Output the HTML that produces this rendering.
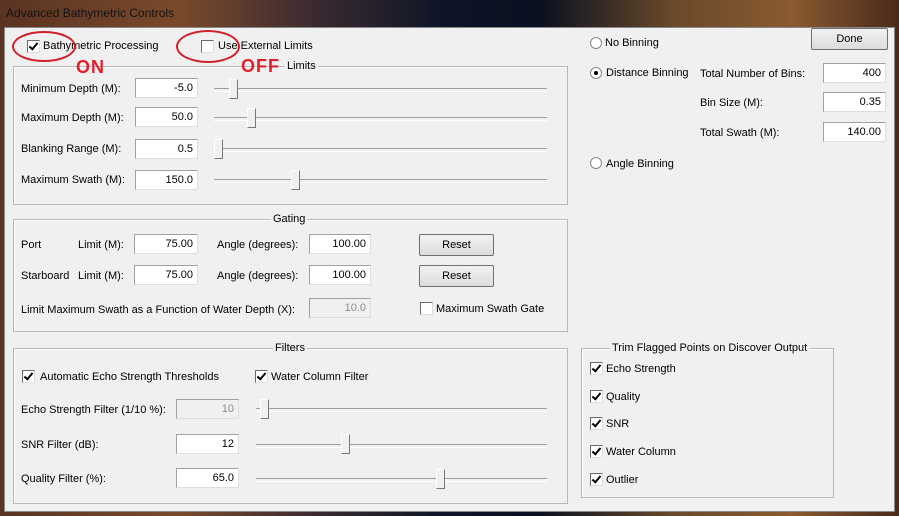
<!DOCTYPE html>
<html><head><meta charset="utf-8"><style>
body{margin:0;width:899px;height:516px;overflow:hidden;position:relative;font-family:"Liberation Sans",sans-serif;font-size:11px;color:#000;
background:linear-gradient(90deg,#5a3422 0%,#7a4a2c 20%,#3a2a30 35%,#0c1426 50%,#0a1020 60%,#6a4a2a 75%,#8a5a30 88%,#4a2a1a 100%);}
.title{position:absolute;left:6px;top:6px;font-size:12px;color:#111;}
.client{position:absolute;left:4px;top:27px;width:891px;height:485px;background:#f0f0f0;border:1px solid #888;box-sizing:border-box;}
.a{position:absolute;white-space:nowrap;line-height:14px;}
.g{position:absolute;border:1px solid #b8b8b8;box-shadow:1px 1px 0 #fff inset;}
.gt{position:absolute;top:-8px;background:#f0f0f0;padding:0 2px;line-height:14px;}
.in{position:absolute;height:20px;box-sizing:border-box;background:#fff;border:1px solid #a0a0a0;border-right-color:#ddd;border-bottom-color:#ddd;text-align:right;padding-right:4px;line-height:18px;}
.in.d{background:#f0f0f0;color:#8a8a8a;}
.cb{position:absolute;width:13px;height:13px;box-sizing:border-box;background:#fff;border:1px solid #6a6a6a;border-right-color:#ddd;border-bottom-color:#ddd;}
.cb.k::after{content:"";position:absolute;left:3px;top:0px;width:3px;height:7px;border:solid #000;border-width:0 2px 2px 0;transform:rotate(40deg);}
.rb{position:absolute;width:12px;height:12px;border-radius:50%;box-sizing:border-box;background:#fff;border:1px solid #888;}
.rb.k::after{content:"";position:absolute;left:3px;top:3px;width:4px;height:4px;border-radius:50%;background:#000;}
.tr{position:absolute;height:2px;border-top:1px solid #a0a0a0;border-bottom:1px solid #fff;}
.th{position:absolute;width:9px;height:20px;box-sizing:border-box;background:#f0f0f0;border:1px solid #fff;border-right-color:#777;border-bottom-color:#777;}
.bt{position:absolute;height:22px;box-sizing:border-box;background:linear-gradient(#f2f2f2,#dcdcdc);border:1px solid #707070;border-radius:2px;text-align:center;line-height:20px;}
.el{position:absolute;border:2px solid #d0202a;border-radius:50%;z-index:4;}
.red{position:absolute;color:#e0202a;font-weight:bold;font-size:18px;line-height:18px;letter-spacing:1px;z-index:5;}
</style></head><body>
<div class="title">Advanced Bathymetric Controls</div>
<div class="client"></div>

<!-- Limits -->
<div class="g" style="left:13px;top:66px;width:553px;height:137px"><div class="gt" style="left:271px">Limits</div></div>
<div class="a" style="left:21px;top:82px">Minimum Depth (M):</div><div class="in" style="left:135px;top:78px;width:63px">-5.0</div>
<div class="tr" style="left:214px;top:88px;width:333px"></div><div class="th" style="left:229px;top:79px"></div>
<div class="a" style="left:21px;top:111px">Maximum Depth (M):</div><div class="in" style="left:135px;top:107px;width:63px">50.0</div>
<div class="tr" style="left:214px;top:117px;width:333px"></div><div class="th" style="left:247px;top:108px"></div>
<div class="a" style="left:21px;top:142px">Blanking Range (M):</div><div class="in" style="left:135px;top:139px;width:63px">0.5</div>
<div class="tr" style="left:214px;top:148px;width:333px"></div><div class="th" style="left:214px;top:139px"></div>
<div class="a" style="left:21px;top:173px">Maximum Swath (M):</div><div class="in" style="left:135px;top:170px;width:63px">150.0</div>
<div class="tr" style="left:214px;top:179px;width:333px"></div><div class="th" style="left:291px;top:170px"></div>

<div class="cb k" style="left:27px;top:40px"></div><div class="a" style="left:43px;top:39px">Bathymetric Processing</div>
<div class="cb" style="left:201px;top:40px"></div><div class="a" style="left:218px;top:39px">Use External Limits</div>
<div class="el" style="left:12px;top:31px;width:60px;height:27px"></div>
<div class="el" style="left:176px;top:30px;width:60px;height:29px"></div>
<div class="red" style="left:76px;top:58px">ON</div>
<div class="red" style="left:241px;top:57px">OFF</div>

<!-- Gating -->
<div class="g" style="left:13px;top:219px;width:553px;height:111px"><div class="gt" style="left:257px">Gating</div></div>
<div class="a" style="left:21px;top:238px">Port</div><div class="a" style="left:78px;top:238px">Limit (M):</div>
<div class="in" style="left:134px;top:234px;width:64px">75.00</div>
<div class="a" style="left:217px;top:238px">Angle (degrees):</div><div class="in" style="left:309px;top:234px;width:62px">100.00</div>
<div class="bt" style="left:419px;top:234px;width:75px">Reset</div>
<div class="a" style="left:21px;top:269px">Starboard</div><div class="a" style="left:78px;top:269px">Limit (M):</div>
<div class="in" style="left:134px;top:265px;width:64px">75.00</div>
<div class="a" style="left:217px;top:269px">Angle (degrees):</div><div class="in" style="left:309px;top:265px;width:62px">100.00</div>
<div class="bt" style="left:419px;top:265px;width:75px">Reset</div>
<div class="a" style="left:21px;top:303px">Limit Maximum Swath as a Function of Water Depth (X):</div>
<div class="in d" style="left:309px;top:298px;width:62px">10.0</div>
<div class="cb" style="left:420px;top:302px"></div><div class="a" style="left:436px;top:302px">Maximum Swath Gate</div>

<!-- Filters -->
<div class="g" style="left:13px;top:348px;width:553px;height:154px"><div class="gt" style="left:259px">Filters</div></div>
<div class="cb k" style="left:22px;top:370px"></div><div class="a" style="left:40px;top:370px">Automatic Echo Strength Thresholds</div>
<div class="cb k" style="left:255px;top:370px"></div><div class="a" style="left:271px;top:370px">Water Column Filter</div>
<div class="a" style="left:21px;top:403px">Echo Strength Filter (1/10 %):</div><div class="in d" style="left:176px;top:399px;width:63px">10</div>
<div class="tr" style="left:256px;top:408px;width:291px"></div><div class="th" style="left:260px;top:399px"></div>
<div class="a" style="left:21px;top:438px">SNR Filter (dB):</div><div class="in" style="left:176px;top:434px;width:63px">12</div>
<div class="tr" style="left:256px;top:444px;width:291px"></div><div class="th" style="left:341px;top:434px"></div>
<div class="a" style="left:21px;top:472px">Quality Filter (%):</div><div class="in" style="left:176px;top:468px;width:63px">65.0</div>
<div class="tr" style="left:256px;top:478px;width:291px"></div><div class="th" style="left:436px;top:469px"></div>

<!-- Right -->
<div class="rb" style="left:590px;top:37px"></div><div class="a" style="left:605px;top:36px">No Binning</div>
<div class="bt" style="left:811px;top:28px;width:77px">Done</div>
<div class="rb k" style="left:590px;top:67px"></div><div class="a" style="left:606px;top:66px">Distance Binning</div>
<div class="a" style="left:700px;top:67px">Total Number of Bins:</div><div class="in" style="left:823px;top:63px;width:63px">400</div>
<div class="a" style="left:700px;top:96px">Bin Size (M):</div><div class="in" style="left:823px;top:92px;width:63px">0.35</div>
<div class="a" style="left:700px;top:126px">Total Swath (M):</div><div class="in" style="left:823px;top:122px;width:63px">140.00</div>
<div class="rb" style="left:590px;top:157px"></div><div class="a" style="left:606px;top:157px">Angle Binning</div>

<div class="g" style="left:581px;top:348px;width:251px;height:148px"><div class="gt" style="left:28px">Trim Flagged Points on Discover Output</div></div>
<div class="cb k" style="left:590px;top:362px"></div><div class="a" style="left:606px;top:362px">Echo Strength</div>
<div class="cb k" style="left:590px;top:390px"></div><div class="a" style="left:606px;top:390px">Quality</div>
<div class="cb k" style="left:590px;top:417px"></div><div class="a" style="left:606px;top:417px">SNR</div>
<div class="cb k" style="left:590px;top:445px"></div><div class="a" style="left:606px;top:445px">Water Column</div>
<div class="cb k" style="left:590px;top:473px"></div><div class="a" style="left:606px;top:473px">Outlier</div>
</body></html>
